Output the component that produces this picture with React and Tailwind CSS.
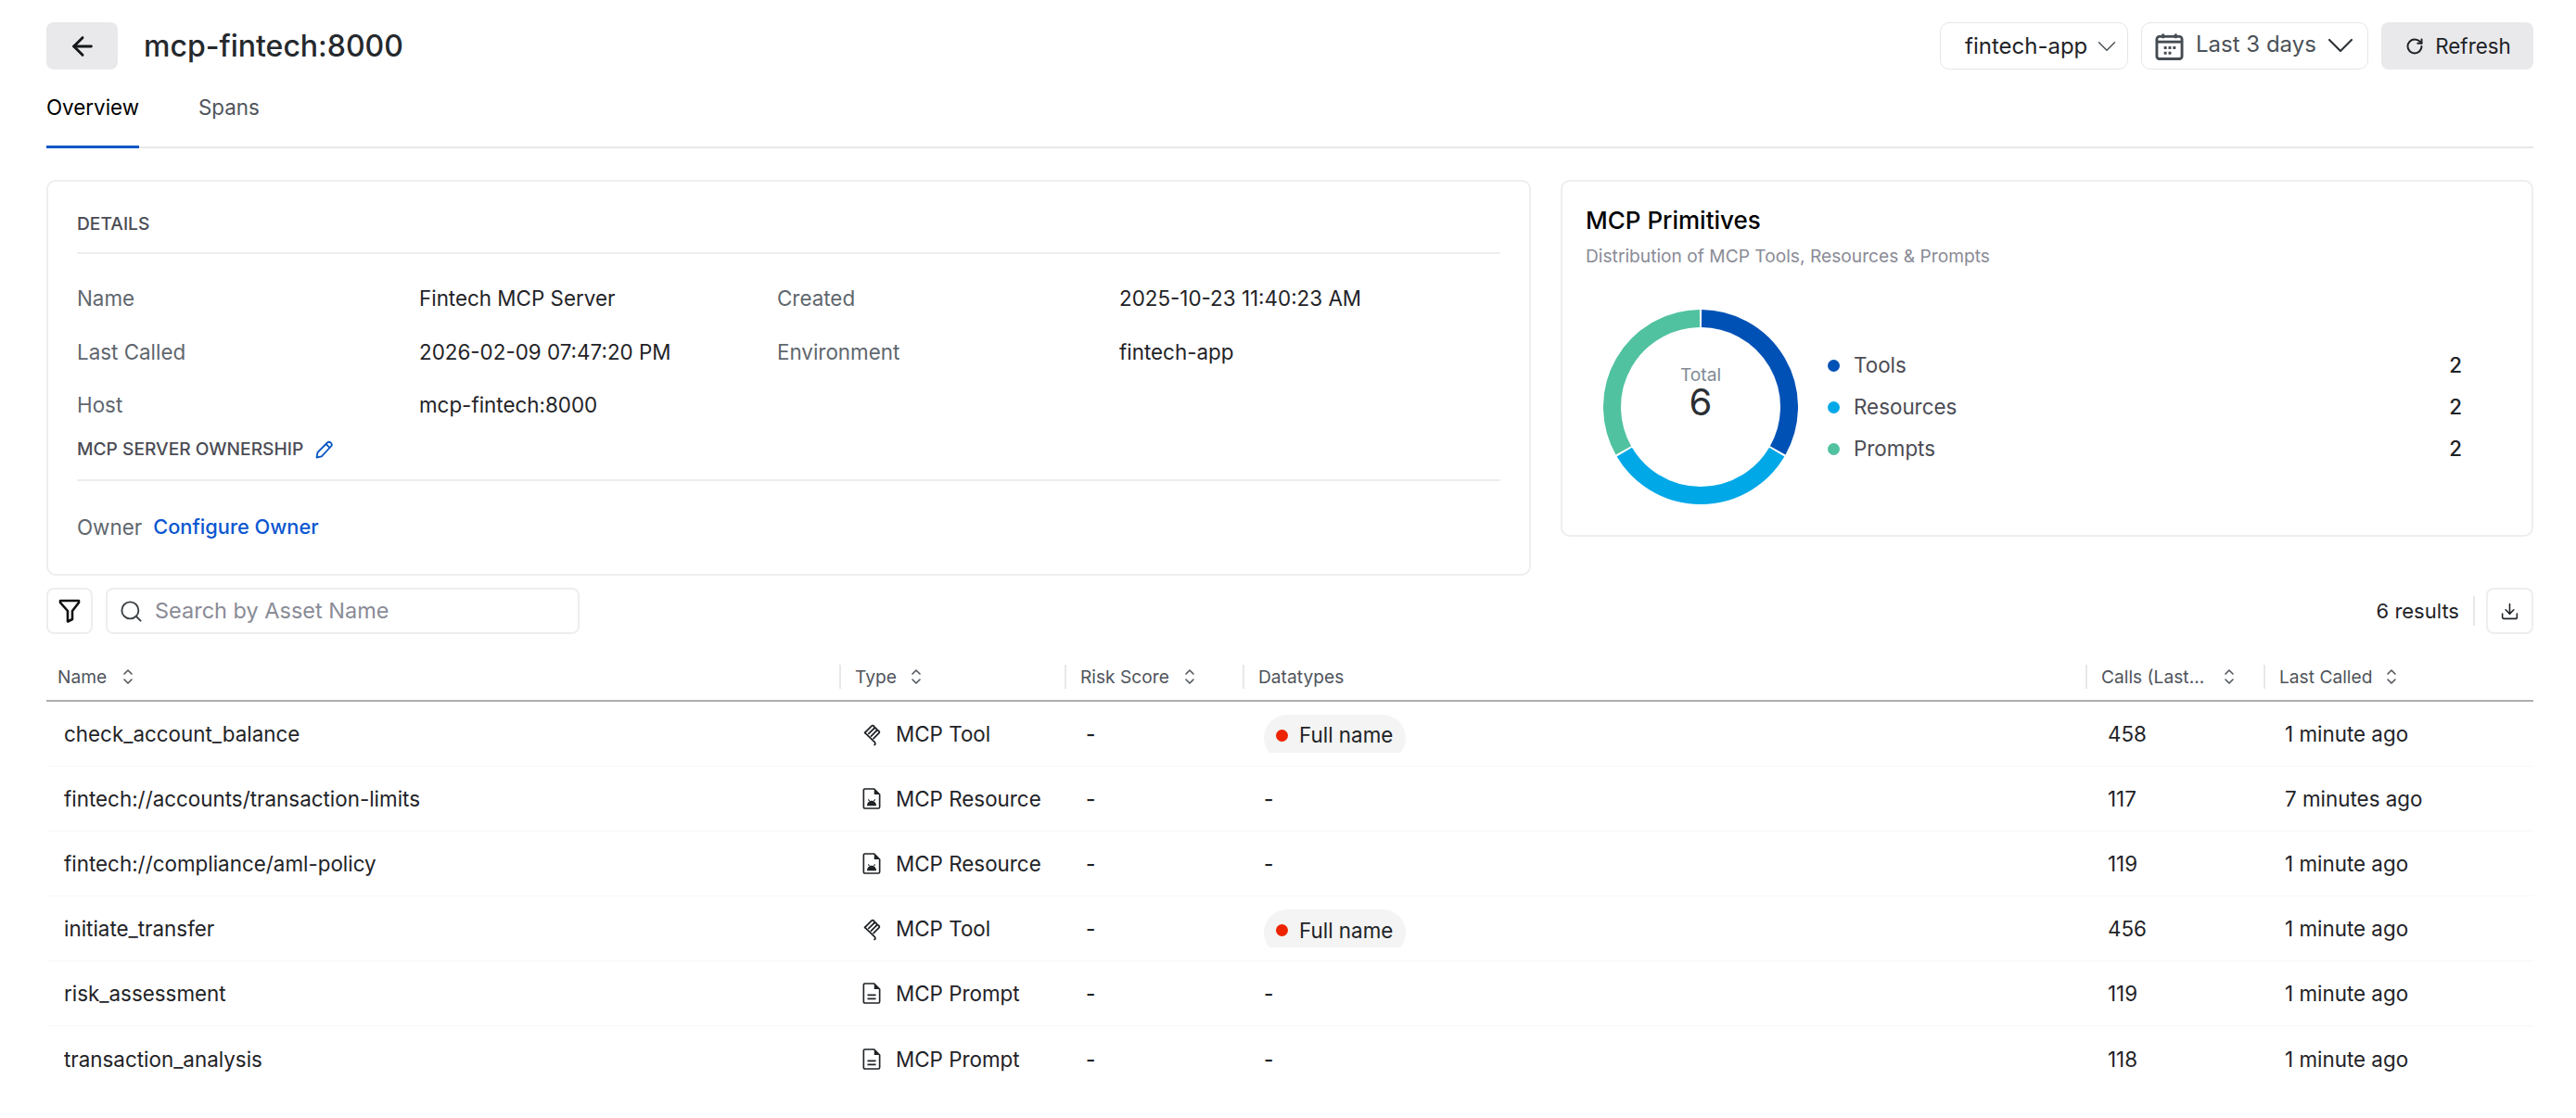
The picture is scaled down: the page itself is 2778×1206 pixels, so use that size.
import { ArrowLeft, ChevronDown, RotateCw, Search, Download } from "lucide-react"

const rows = [
    { name: 'check_account_balance', type: 'tool', calls: '458', last: '1 minute ago', pii: true },
    { name: 'fintech://accounts/transaction-limits', type: 'resource', calls: '117', last: '7 minutes ago' },
    { name: 'fintech://compliance/aml-policy', type: 'resource', calls: '119', last: '1 minute ago' },
    { name: 'initiate_transfer', type: 'tool', calls: '456', last: '1 minute ago', pii: true },
    { name: 'risk_assessment', type: 'prompt', calls: '119', last: '1 minute ago' },
    { name: 'transaction_analysis', type: 'prompt', calls: '118', last: '1 minute ago' },
]

const typeLabels = { tool: 'MCP Tool', resource: 'MCP Resource', prompt: 'MCP Prompt' }

const ToolIcon = () => (
    <svg width="22" height="26" viewBox="0 0 20 25" fill="none" stroke="#1f2327" strokeWidth="1.7" strokeLinecap="round" strokeLinejoin="round">
        <path d="M2 11 L9 4 C10.5 2.5 13 5 11.5 6.5 L6 12" />
        <path d="M11.5 6.5 C13 5 15.5 7.5 14 9 L8.5 14.5" />
        <path d="M14 9 C15.5 7.5 18 10 16.5 11.5 L11 17" />
        <path d="M2 11 L12 20.5 C13.5 22 12.5 23.5 12 23.5" />
    </svg>
)

const ResourceIcon = () => (
    <svg width="20" height="25" viewBox="0 0 22 26" fill="none">
        <path d="M3 1.5 H14 L20.5 8 V23 C20.5 24 20 24.5 19 24.5 H3 C2 24.5 1.5 24 1.5 23 V3 C1.5 2 2 1.5 3 1.5 Z" stroke="#1f2327" strokeWidth="1.8" strokeLinejoin="round" />
        <path d="M14 1.5 L20.5 8 H14 Z" fill="#1f2327" />
        <path d="M5.5 21.5 C5.5 18 8 15.5 11 15.5 C14 15.5 16.5 18 16.5 21.5 Z" fill="#1f2327" />
        <path d="M7 14 L8.5 16 M15 14 L13.5 16" stroke="#1f2327" strokeWidth="1.2" />
    </svg>
)

const PromptIcon = () => (
    <svg width="20" height="25" viewBox="0 0 22 26" fill="none">
        <path d="M3 1.5 H14 L20.5 8 V23 C20.5 24 20 24.5 19 24.5 H3 C2 24.5 1.5 24 1.5 23 V3 C1.5 2 2 1.5 3 1.5 Z" stroke="#1f2327" strokeWidth="1.8" strokeLinejoin="round" />
        <path d="M14 1.5 L20.5 8 H14 Z" fill="#1f2327" />
        <path d="M6 15 H16 M6 19.5 H16" stroke="#1f2327" strokeWidth="1.8" />
    </svg>
)

const typeIcons = { tool: ToolIcon, resource: ResourceIcon, prompt: PromptIcon }

const CalendarIcon = () => (
    <svg width="31" height="30" viewBox="0 0 32 30" fill="none" stroke="#454c52" className="shrink-0">
        <rect x="2" y="4" width="28" height="25" rx="3" strokeWidth="3" />
        <path d="M2 10 H30" strokeWidth="3" />
        <path d="M9 1 V6 M23 1 V6" strokeWidth="3" />
        <path d="M10 15 h3 v3 h-3 z M15 15 h3 v3 h-3 z M20 15 h3 v3 h-3 z M10 21 h3 v3 h-3 z M15 21 h3 v3 h-3 z" fill="#454c52" stroke="none" />
    </svg>
)

const FilterIcon = () => (
    <svg width="24" height="26" viewBox="0 0 24 26" fill="none" stroke="#111" strokeWidth="2.6" strokeLinejoin="round" strokeLinecap="round">
        <path d="M2 2 H22 V4 L15 13 V22 L10 24.5 V13 L2 4 Z" />
    </svg>
)

const PencilIcon = () => (
    <svg width="20" height="20" viewBox="0 0 20 20" fill="none" stroke="#0b57c4" strokeWidth="1.8" strokeLinejoin="round">
        <path d="M1.5 18.5 L2.5 13 L13 2.5 C14 1.5 15.5 1.5 16.8 2.7 C18 4 18 5.5 17 6.5 L6.8 17.3 Z" />
        <path d="M11.5 4 L15.8 8.2" />
    </svg>
)

const SortIcon = () => (
    <svg width="12" height="18" viewBox="0 0 12 18" fill="none" stroke="#50555c" strokeWidth="1.6" strokeLinecap="round" strokeLinejoin="round" className="shrink-0">
        <path d="M2 6 L6 2 L10 6 M2 12 L6 16 L10 12" />
    </svg>
)

const Donut = () => {
    const r = 95.5
    const c = 105
    const arc = (start, end, color) => {
        const toXY = (deg) => {
            const rad = (deg - 90) * Math.PI / 180
            return `${c + r * Math.cos(rad)} ${c + r * Math.sin(rad)}`
        }
        return <path d={`M ${toXY(start)} A ${r} ${r} 0 0 1 ${toXY(end)}`} stroke={color} strokeWidth="19" fill="none" />
    }
    return (
        <svg width="210" height="210" viewBox="0 0 210 210">
            {arc(0.6, 119.4, '#0051b5')}
            {arc(120.6, 239.4, '#00a8e8')}
            {arc(240.6, 359.4, '#50c2a0')}
        </svg>
    )
}

const Detail = ({ label, value }) => (
    <>
        <span className="text-[#5f676e]">{label}</span>
        <span className="text-[#1f2327]">{value}</span>
    </>
)

const HeaderCell = ({ label, sort, first, gap = 'gap-[14px]' }) => (
    <div className={`flex items-center h-[26px] ${gap} ${first ? 'pl-[12px]' : 'pl-[15px] border-l-2 border-[#e8e8ea]'}`}>
        <span className="text-[19.2px] text-[#4f545b]">{label}</span>
        {sort && <SortIcon />}
    </div>
)

const App = () => {
    return (
        <div className="w-[2778px] h-[1206px] bg-white pl-[50px] pr-[46px] pt-[24px] overflow-hidden text-[#1f2327] text-[22.4px] font-['Inter',sans-serif]">
            {/* top bar */}
            <div className="flex items-center h-[51px]">
                <button className="w-[77px] h-[51px] bg-[#e9e9eb] rounded-[8px] flex items-center justify-center">
                    <ArrowLeft size={32} strokeWidth={2.2} color="#15181b" />
                </button>
                <h1 className="ml-[28px] text-[32px] font-medium text-[#25292d]">mcp-fintech:8000</h1>
                <div className="ml-auto flex items-center gap-[14px]">
                    <div className="w-[203px] h-[51px] border border-[#e6e6e8] rounded-[10px] flex items-center pl-[26px] gap-[4px] text-[24px]">
                        <span>fintech-app</span>
                        <ChevronDown size={34} strokeWidth={1} color="#4a5055" className="shrink-0" />
                    </div>
                    <div className="w-[245px] h-[51px] border border-[#e6e6e8] rounded-[10px] flex items-center pl-[14px] gap-[13px] text-[24px]">
                        <CalendarIcon />
                        <span className="text-[#4b5157] mb-[4px] shrink-0">Last 3 days</span>
                        <ChevronDown size={48} strokeWidth={1.1} color="#30363a" className="shrink-0 -ml-[11px] mb-[2px]" />
                    </div>
                    <button className="w-[164px] h-[51px] bg-[#e9e9eb] rounded-[8px] flex items-center justify-center gap-[12px] pl-[2px]">
                        <RotateCw size={20} strokeWidth={2.4} color="#1f2327" />
                        <span>Refresh</span>
                    </button>
                </div>
            </div>

            {/* tabs */}
            <div className="flex gap-[64px] h-[85px] border-b-2 border-[#e8e8ea]">
                <div className="h-[85px] w-[100px] pt-[24px] border-b-[3px] border-[#0b57c4] text-black text-center">Overview</div>
                <div className="pt-[24px] text-[#4f545b]">Spans</div>
            </div>

            <div className="flex items-start gap-[32px] mt-[34px]">
                {/* details card */}
                <div className="w-[1601px] h-[427px] border-2 border-[#eeeeef] rounded-[10px] px-[31px]">
                    <div className="h-[78px] pt-[31px] border-b-2 border-[#eeeeef] text-[19.2px] font-medium text-[#4b4c55] leading-[28px]">DETAILS</div>
                    <div className="grid grid-cols-[369px_386px_369px_1fr] auto-rows-[57.5px] items-center mt-[19.5px]">
                        <Detail label="Name" value="Fintech MCP Server" />
                        <Detail label="Created" value="2025-10-23 11:40:23 AM" />
                        <Detail label="Last Called" value="2026-02-09 07:47:20 PM" />
                        <Detail label="Environment" value="fintech-app" />
                        <Detail label="Host" value="mcp-fintech:8000" />
                    </div>
                    <div className="flex items-center gap-[13px] h-[44px] -mt-[3.5px] border-b-2 border-[#eeeeef] pb-[10px] box-content text-[19.2px] font-medium text-[#4b4c55]">
                        <span>MCP SERVER OWNERSHIP</span>
                        <PencilIcon />
                    </div>
                    <div className="flex gap-[12px] mt-[33px]">
                        <span className="text-[#5f676e]">Owner</span>
                        <span className="text-[21.8px] text-[#0b57d0] font-medium">Configure Owner</span>
                    </div>
                </div>

                {/* primitives card */}
                <div className="flex-1 h-[385px] border-2 border-[#eeeeef] rounded-[10px] pl-[25px] pr-[75px]">
                    <h2 className="text-[26px] font-medium text-black mt-[25px] leading-[34px]">MCP Primitives</h2>
                    <p className="text-[19.2px] text-[#8a8b96] mt-[7px] leading-[28px]">Distribution of MCP Tools, Resources &amp; Prompts</p>
                    <div className="flex items-center mt-[44px] pl-[19px]">
                        <div className="relative w-[210px] h-[210px] shrink-0">
                            <Donut />
                            <div className="absolute inset-0 flex flex-col items-center pt-[58px]">
                                <span className="text-[19.2px] leading-[24px] text-[#808a94]">Total</span>
                                <span className="text-[40px] leading-[32px] mt-[2px] text-[#2a2f33]">6</span>
                            </div>
                        </div>
                        <div className="flex-1 ml-[32px] flex flex-col gap-[5px]">
                            {[['Tools', 'bg-[#0051b5]'], ['Resources', 'bg-[#00a8e8]'], ['Prompts', 'bg-[#50c2a0]']].map(([label, color]) => (
                                <div key={label} className="flex items-center h-[40px]">
                                    <span className={`w-[13px] h-[13px] rounded-full ${color}`} />
                                    <span className="ml-[15px] text-[#4b4c55]">{label}</span>
                                    <span className="ml-auto font-medium text-[#1f2327]">2</span>
                                </div>
                            ))}
                        </div>
                    </div>
                </div>
            </div>

            {/* toolbar */}
            <div className="flex items-center mt-[13px] h-[50px]">
                <button className="w-[50px] h-[50px] border-2 border-[#eeeeef] rounded-[8px] flex items-center justify-center">
                    <FilterIcon />
                </button>
                <div className="ml-[14px] w-[511px] h-[50px] border-2 border-[#eeeeef] rounded-[8px] flex items-center pl-[12px] gap-[12px]">
                    <Search size={27} strokeWidth={1.7} color="#3c4146" />
                    <span className="text-[23.5px] text-[#8a8b96]">Search by Asset Name</span>
                </div>
                <span className="ml-auto text-[22px] text-[#1f2327]">6 results</span>
                <span className="w-[2px] h-[32px] bg-[#e8e8ea] ml-[15px] mr-[12px]" />
                <button className="w-[51px] h-[50px] border-2 border-[#eeeeef] rounded-[8px] flex items-center justify-center">
                    <Download size={21} strokeWidth={1.8} color="#1f2327" />
                </button>
            </div>

            {/* table */}
            <div className="mt-[20px]">
                <div className="grid grid-cols-[855px_243px_192px_909px_192px_1fr] items-center pt-[13px] pb-[12px] border-b-2 border-[#aeaeb2]">
                    <HeaderCell label="Name" sort first gap="gap-[17px]" />
                    <HeaderCell label="Type" sort gap="gap-[15px]" />
                    <HeaderCell label="Risk Score" sort gap="gap-[16px]" />
                    <HeaderCell label="Datatypes" />
                    <HeaderCell label="Calls (Last..." sort gap="gap-[21px]" />
                    <HeaderCell label="Last Called" sort gap="gap-[15px]" />
                </div>
                {rows.map(row => {
                    const Icon = typeIcons[row.type]
                    return (
                        <div key={row.name} className="grid grid-cols-[855px_243px_192px_909px_192px_1fr] items-center h-[70.1px] first:h-[67px] border-b border-[#f8f8f8] last:border-b-0">
                            <span className="pl-[19px]">{row.name}</span>
                            <span className="flex items-center pl-[25px]">
                                <span className="w-[36px] shrink-0 flex"><Icon /></span>
                                {typeLabels[row.type]}
                            </span>
                            <span className="pl-[23px] font-medium">-</span>
                            <span className="pl-[23px]">
                                {row.pii ? (
                                    <span className="flex h-[41px] w-[153px] overflow-hidden">
                                        <span className="flex items-center w-[153px] h-[50px] shrink-0 rounded-full bg-[#f3f4f3] pl-[13px] pb-[6px] gap-[12px] text-[#1f2327]">
                                            <span className="w-[13px] h-[13px] rounded-full bg-[#ee2400] shrink-0" />
                                            Full name
                                        </span>
                                    </span>
                                ) : <span className="font-medium">-</span>}
                            </span>
                            <span className="pl-[24px]">{row.calls}</span>
                            <span className="pl-[23px]">{row.last}</span>
                        </div>
                    )
                })}
            </div>
        </div>
    )
}

export default App
